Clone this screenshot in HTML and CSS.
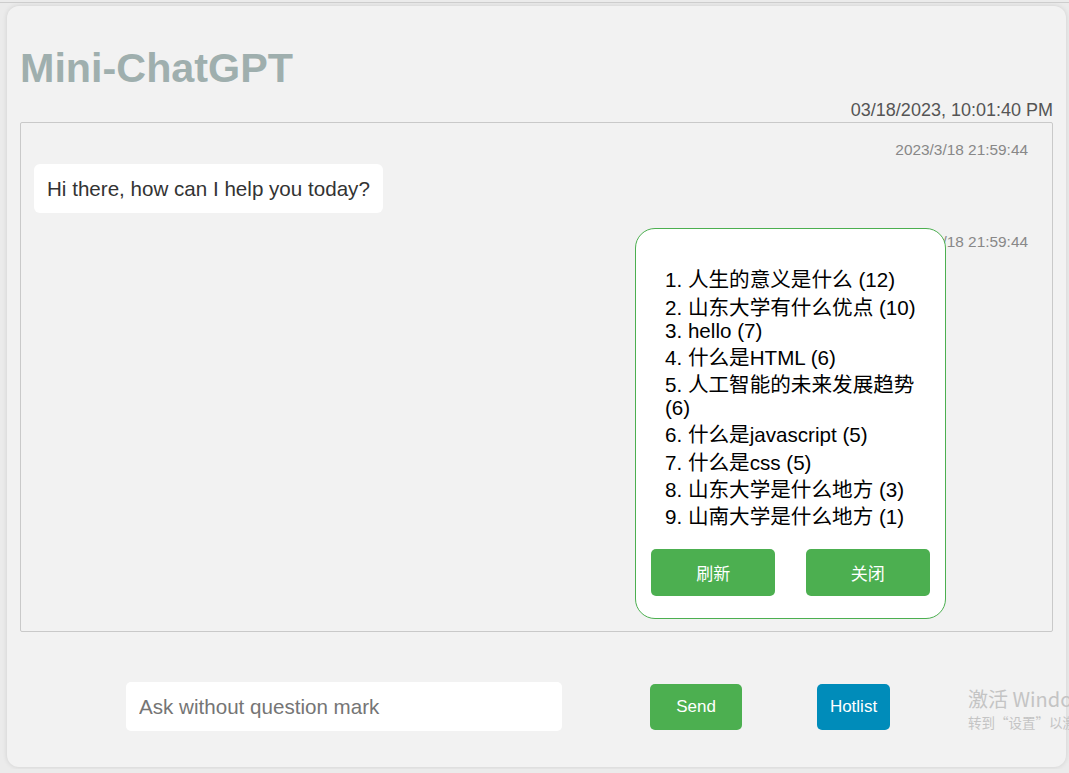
FILE: index.html
```html
<!DOCTYPE html>
<html lang="zh-CN">
<head>
<meta charset="utf-8">
<title>Mini-ChatGPT</title>
<link rel="stylesheet" href="styles.css">
</head>
<body>
<div class="app">
  <h1 class="title">Mini-ChatGPT</h1>
  <div class="clock">03/18/2023, 10:01:40 PM</div>
  <div class="chat">
    <div class="msg">
      <div class="time">2023/3/18 21:59:44</div>
      <div class="bubble bot">Hi there, how can I help you today?</div>
    </div>
    <div class="msg">
      <div class="time">2023/3/18 21:59:44</div>
    </div>
  </div>
  <div class="composer">
    <input class="ask" type="text" placeholder="Ask without question mark">
    <button class="btn send">Send</button>
    <button class="btn hot">Hotlist</button>
  </div>
</div>

<div class="hotlist">
  <ol class="hot-items">
    <li class="zh">人生的意义是什么 (12)</li>
    <li class="zh">山东大学有什么优点 (10)</li>
    <li>hello (7)</li>
    <li class="zh">什么是HTML (6)</li>
    <li class="zh">人工智能的未来发展趋势 (6)</li>
    <li class="zh">什么是javascript (5)</li>
    <li class="zh">什么是css (5)</li>
    <li class="zh">山东大学是什么地方 (3)</li>
    <li class="zh">山南大学是什么地方 (1)</li>
  </ol>
  <div class="hot-actions">
    <button class="btn pop">刷新</button>
    <button class="btn pop">关闭</button>
  </div>
</div>

<div class="watermark">
  <div class="wm-big">激活 Windows</div>
  <div class="wm-small">转到“设置”以激活 Windows。</div>
</div>
</body>
</html>
```

FILE: styles.css
```css
html {
  background: #ebebeb;
}
body {
  margin: 2px 0 0 0;
  border-top: 1px solid #cdcdcd;
  padding-top: 3px;
  background: #ebebeb;
  font-family: "Liberation Sans", Arial, "Noto Sans CJK SC", sans-serif;
  overflow: hidden;
  height: 767px;
  box-sizing: border-box;
}
.app {
  margin-left: 7px;
  width: 1059px;
  height: 761px;
  box-sizing: border-box;
  padding: 0 13px;
  background: #f2f2f2;
  border-radius: 12px;
  box-shadow: 0 0 5px rgba(0, 0, 0, 0.12);
}
.title {
  margin: 0;
  padding-top: 38px;
  font-size: 41.3px;
  line-height: 48px;
  font-weight: bold;
  color: #9fafae;
}
.clock {
  margin-top: 8px;
  text-align: right;
  font-size: 18px;
  line-height: 21px;
  color: #555;
}
.chat {
  margin-top: 1px;
  height: 510px;
  box-sizing: border-box;
  border: 1px solid #c9c9c9;
  border-radius: 2px;
  padding: 13px;
}
.msg {
  margin-bottom: 20px;
}
.time {
  margin: 5px 0 6px;
  padding-right: 11px;
  text-align: right;
  font-size: 15.4px;
  line-height: 17px;
  color: #888;
}
.bubble {
  display: inline-block;
  background: #fff;
  border-radius: 6px;
  padding: 13px;
  font-size: 20.6px;
  line-height: 23px;
  color: #333;
}
.composer {
  display: flex;
  align-items: center;
  margin-top: 50px;
  padding-left: 106px;
}
.ask {
  width: 436px;
  height: 49px;
  box-sizing: border-box;
  border: none;
  border-radius: 5px;
  padding: 0 13px;
  background: #fff;
  font-family: "Liberation Sans", Arial, sans-serif;
  font-size: 20.6px;
  color: #333;
  outline: none;
}
.ask::placeholder {
  color: #757575;
}
.btn {
  border: none;
  border-radius: 5px;
  color: #fff;
  font-family: "Liberation Sans", Arial, "Noto Sans CJK SC", sans-serif;
  font-size: 17px;
  padding: 0;
  cursor: pointer;
}
.send {
  margin-left: 88px;
  width: 92px;
  height: 46px;
  background: #4caf50;
}
.hot {
  margin-left: 75px;
  width: 73px;
  height: 46px;
  background: #008cba;
}
.hotlist {
  position: absolute;
  left: 635px;
  top: 228px;
  width: 311px;
  box-sizing: border-box;
  background: #fff;
  border: 1px solid #4caf50;
  border-radius: 20px;
  padding: 15px 0 22px;
}
.hot-items {
  margin: 20px 0 21px;
  padding: 0 20px 0 29px;
  list-style-position: inside;
  font-size: 20.6px;
  line-height: 23px;
  color: #000;
}
.hot-items li.zh {
  padding-top: 4.3px;
}
.hot-actions {
  display: flex;
  justify-content: space-around;
}
.pop {
  width: 124px;
  height: 47px;
  background: #4caf50;
  font-size: 17px;
}
.watermark {
  position: absolute;
  left: 968px;
  top: 686px;
  white-space: nowrap;
  color: #c4c4c4;
  font-family: "Noto Sans CJK SC", sans-serif;
}
.wm-big {
  font-size: 20px;
  line-height: 26px;
}
.wm-small {
  font-size: 13.5px;
  line-height: 20px;
}
```
